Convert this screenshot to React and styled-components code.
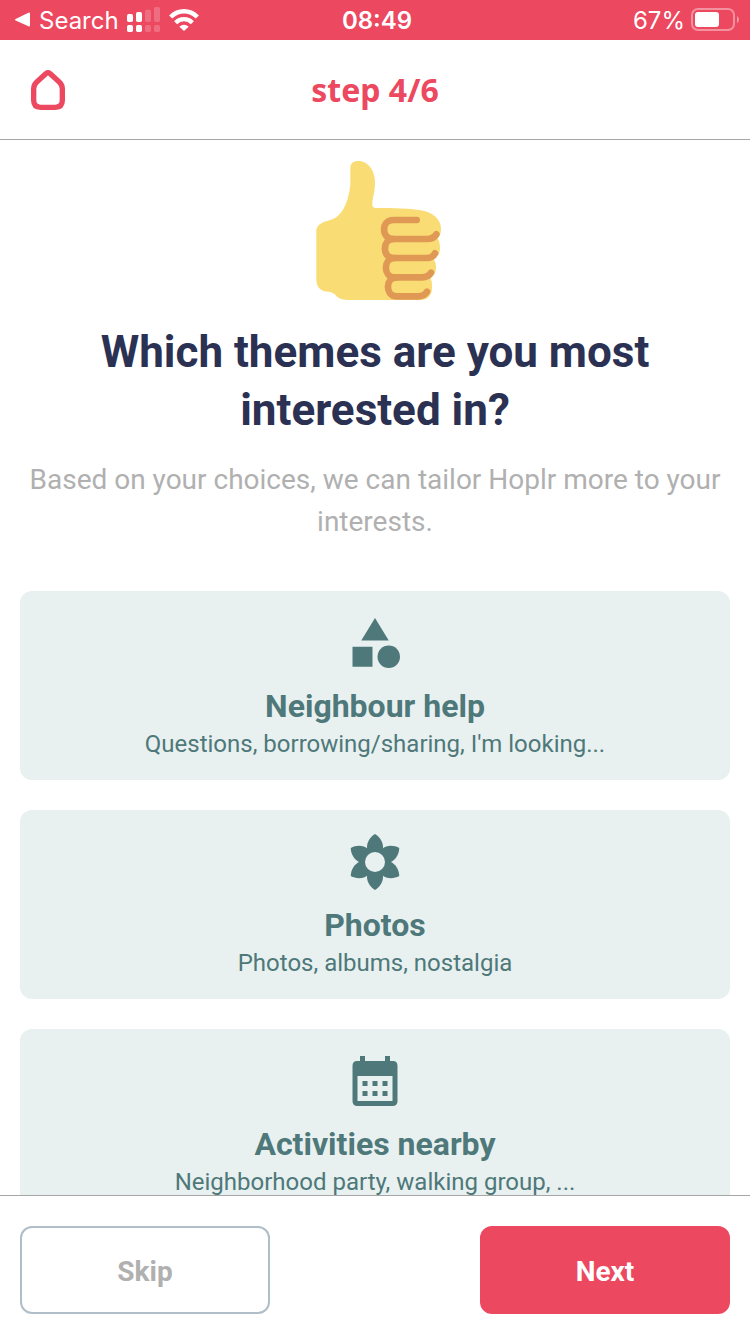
import React from 'react'
import styled, { createGlobalStyle } from 'styled-components';
import { MdCategory } from 'react-icons/md';

const GlobalStyle = createGlobalStyle`
* {
  box-sizing: border-box;
}
body {
  margin: 0;
  background: #ffffff;
  font-family: Roboto, "Liberation Sans", sans-serif;
}
`

const Screen = styled.div`
display: flex;
flex-direction: column;
height: 100vh;
`

const StatusBar = styled.div`
display: grid;
grid-template-columns: 1fr auto 1fr;
align-items: center;
flex: none;
height: 40px;
padding: 0 10px 0 14px;
background: #ec4860;
color: #ffffff;
font-family: Inter, sans-serif;
font-size: 24px;
line-height: 38px;
`

const StatusGroup = styled.div`
display: flex;
align-items: center;
justify-content: ${({ $end }) => ($end ? 'flex-end' : 'flex-start')};
gap: ${({ $end }) => ($end ? '6px' : '8px')};
`

const StatusText = styled.span`
padding-top: 2px;
font-weight: ${({ $bold }) => ($bold ? 600 : 400)};
`

const Header = styled.header`
display: grid;
grid-template-columns: 1fr auto 1fr;
align-items: center;
flex: none;
height: 100px;
padding: 0 30px;
border-bottom: 1px solid #a6a6a6;
`

const HomeButton = styled.button`
display: flex;
justify-self: start;
padding: 0;
border: none;
background: none;
`

const Step = styled.div`
color: #ec4860;
font-family: "Noto Sans", sans-serif;
font-size: 32px;
font-weight: 700;
line-height: 40px;
`

const Content = styled.main`
display: flex;
flex-direction: column;
align-items: center;
flex: 1;
min-height: 0;
padding: 20px 20px 0;
overflow-y: auto;
scrollbar-width: none;
text-align: center;

> * {
  flex: none;
}
`

const Title = styled.h1`
max-width: 640px;
margin: 23px 0 20px;
color: #2b3152;
font-size: 44px;
font-weight: 700;
line-height: 58px;
`

const Intro = styled.p`
margin: 0 0 48px;
color: #b0b0b0;
font-size: 28px;
line-height: 42px;
`

const Themes = styled.div`
display: flex;
flex-direction: column;
gap: 30px;
width: 100%;
padding-bottom: 30px;
`

const Theme = styled.button`
display: flex;
flex-direction: column;
align-items: center;
padding: 22px 20px 17px;
border: none;
border-radius: 12px;
background: #e8f1f0;
color: #4e7879;
font-family: inherit;
`

const ThemeName = styled.span`
margin-top: 14px;
font-size: 32px;
font-weight: 700;
line-height: 38px;
`

const ThemeText = styled.span`
font-size: 24px;
line-height: 38px;
`

const Footer = styled.footer`
display: flex;
justify-content: space-between;
flex: none;
padding: 30px 20px 20px;
border-top: 1px solid #a6a6a6;
`

const Button = styled.button`
width: 250px;
height: 88px;
padding: 2px 0 0;
border: 2px solid ${({ $primary }) => ($primary ? '#ec4860' : '#b0bec8')};
border-radius: 12px;
background: ${({ $primary }) => ($primary ? '#ec4860' : '#ffffff')};
color: ${({ $primary }) => ($primary ? '#ffffff' : '#b0b0b0')};
font-family: inherit;
font-size: 28px;
font-weight: 700;
`

const BackArrow = () => (
    <svg width="17" height="16" viewBox="0 0 17 16" fill="currentColor">
        <path d="M1.6 7 14.4 .7Q16 0 16 1.6V13.4Q16 15 14.4 14.3L1.6 8.6Q0 7.8 1.6 7Z" />
    </svg>
);

const Signal = () => (
    <svg width="34" height="26" viewBox="378 21 102 78" fill="currentColor">
        <rect x="378" y="42" width="18" height="24" rx="5" />
        <rect x="405" y="36" width="18" height="30" rx="5" />
        <rect x="378" y="75" width="18" height="21" rx="5" />
        <rect x="405" y="75" width="18" height="21" rx="5" />
        <g opacity="0.2">
            <rect x="432" y="29" width="18" height="37" rx="5" />
            <rect x="459" y="21" width="18" height="45" rx="5" />
            <rect x="432" y="75" width="18" height="21" rx="5" />
            <rect x="459" y="75" width="18" height="21" rx="5" />
        </g>
    </svg>
);

const Wifi = () => (
    <svg width="30" height="22" viewBox="0 0 90 66">
        <g fill="none" stroke="currentColor" strokeWidth="13">
            <path d="M5 24C28 1 62 1 85 24" />
            <path d="M20 41C34 27 56 27 70 41" />
        </g>
        <path d="M45 66 31 53Q45 41 59 53Z" fill="currentColor" />
    </svg>
);

const Battery = () => (
    <svg width="49" height="24" viewBox="0 0 49 24">
        <rect x="1" y="1" width="42" height="21" rx="6" fill="none" stroke="#ffffff" strokeOpacity="0.4" strokeWidth="2" />
        <rect x="4" y="4" width="24" height="15" rx="3" fill="#ffffff" />
        <path d="M46 8Q48 9 48 11.5T46 15Z" fill="#ffffff" fillOpacity="0.45" />
    </svg>
);

const Home = () => (
    <svg width="36" height="42" viewBox="90 208 108 126" fill="none" stroke="#ec4860" strokeWidth="16" strokeLinejoin="round">
        <path d="M139 221Q144 217 149 221L177 246Q187 255 187 267V302Q187 323 166 323H122Q101 323 101 302V267Q101 255 111 246Z" />
    </svg>
);

const Thumb = () => (
    <svg width="140" height="140" viewBox="15 30 420 420">
        <path fill="#f9dc73" d="M151 55C151 40 160 33 174 33C204 32 225 62 225 97C225 130 216 146 217 166Q218 174 227 174C280 174 330 175 362 181C402 187 423 210 423 237Q423 254 413 265Q420 275 420 296Q420 315 402 329Q409 340 408 354Q407 374 392 385Q397 397 396 413C396 436 382 450 361 450H145C121 450 112 442 104 433C91 422 81 427 69 422Q49 415 49 388V247C49 214 79 217 107 203C132 188 147 147 151 103Z" />
        <g fill="none" stroke="#e09954" strokeWidth="20" strokeLinecap="round">
            <path d="M350 210H280C243 210 243 267 280 267H382Q400 267 409 253" />
            <path d="M281 267C246 267 246 324 281 324H380Q397 324 405 310" />
            <path d="M284 324C249 324 249 382 284 382H366Q385 382 393 368" />
            <path d="M290 382C255 382 255 439 290 439H354Q373 439 381 425" />
        </g>
    </svg>
);

const Flower = () => (
    <svg width="60" height="60" viewBox="0 0 60 60">
        {[0, 60, 120, 180, 240, 300].map((angle) => (
            <path
                key={angle}
                transform={`rotate(${angle} 30 30)`}
                fill="currentColor"
                d="M30 2C35 5 39 11 37.8 17.5L30 31 22.2 17.5C21 11 25 5 30 2Z"
            />
        ))}
        <circle cx="30" cy="30" r="15" fill="currentColor" />
        <circle cx="30" cy="30" r="10" fill="#e8f1f0" />
    </svg>
);

const Calendar = () => (
    <svg width="60" height="60" viewBox="0 0 60 60" fill="currentColor">
        <path fillRule="evenodd" d="M15 5H20V10H40V5H45V10H48Q52.5 10 52.5 15V50Q52.5 55 47.5 55H12.5Q7.5 55 7.5 50V15Q7.5 10 12 10H15ZM12.5 25V50H47.5V25Z" />
        <path d="M17.5 30h5v5h-5zM27.5 30h5v5h-5zM37.5 30h5v5h-5zM17.5 40h5v5h-5zM27.5 40h5v5h-5zM37.5 40h5v5h-5z" />
    </svg>
);

const themes = [
    { name: 'Neighbour help', text: "Questions, borrowing/sharing, I'm looking...", icon: <MdCategory size={60} /> },
    { name: 'Photos', text: 'Photos, albums, nostalgia', icon: <Flower /> },
    { name: 'Activities nearby', text: 'Neighborhood party, walking group, ...', icon: <Calendar /> },
];

const App = () => {
    return (
        <Screen>
            <GlobalStyle />
            <StatusBar>
                <StatusGroup>
                    <BackArrow />
                    <StatusText>Search</StatusText>
                    <Signal />
                    <Wifi />
                </StatusGroup>
                <StatusText $bold>08:49</StatusText>
                <StatusGroup $end>
                    <StatusText>67%</StatusText>
                    <Battery />
                </StatusGroup>
            </StatusBar>
            <Header>
                <HomeButton type="button" aria-label="Home">
                    <Home />
                </HomeButton>
                <Step>step 4/6</Step>
            </Header>
            <Content>
                <Thumb />
                <Title>Which themes are you most interested in?</Title>
                <Intro>Based on your choices, we can tailor Hoplr more to your interests.</Intro>
                <Themes>
                    {themes.map(({ name, text, icon }) => (
                        <Theme key={name} type="button">
                            {icon}
                            <ThemeName>{name}</ThemeName>
                            <ThemeText>{text}</ThemeText>
                        </Theme>
                    ))}
                </Themes>
            </Content>
            <Footer>
                <Button type="button">Skip</Button>
                <Button type="button" $primary>Next</Button>
            </Footer>
        </Screen>
    );
};

export default App;
